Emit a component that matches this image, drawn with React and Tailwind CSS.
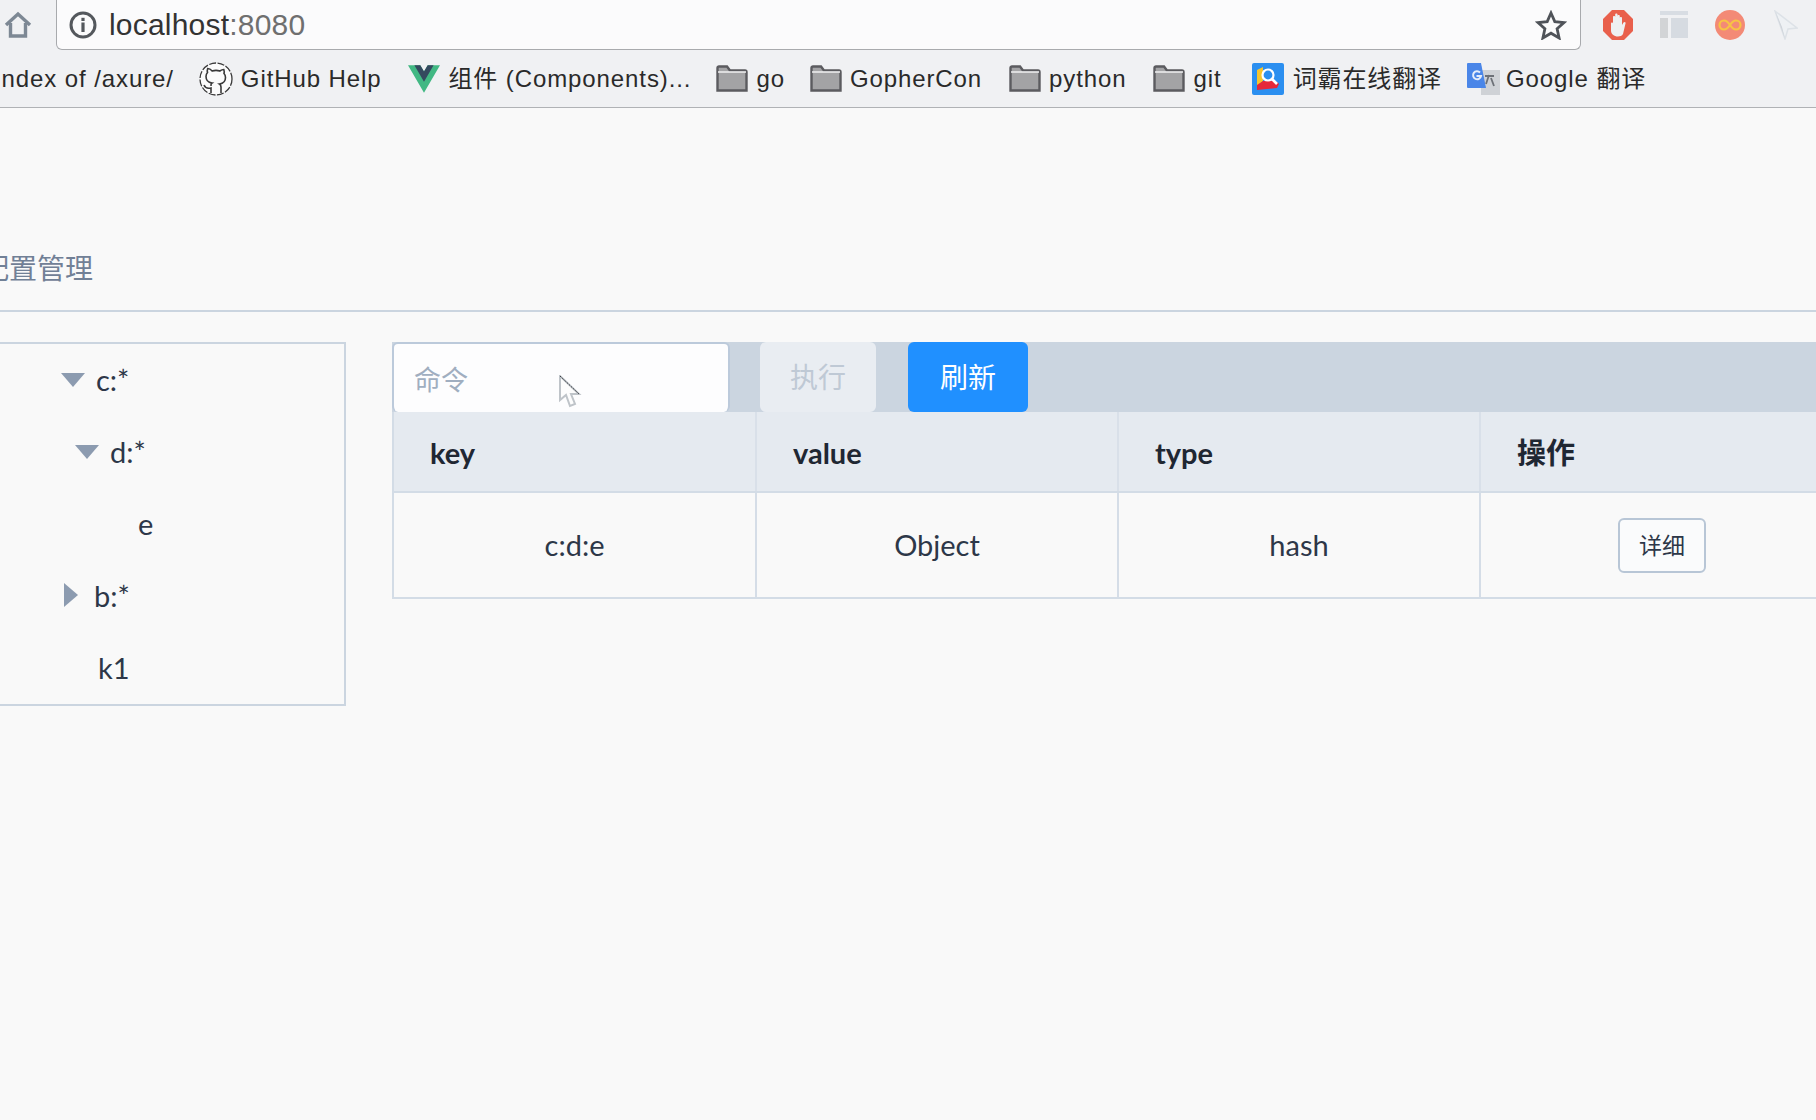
import React from "react";

const Folder = ({ className = "" }) => (
  <svg width="32" height="27" viewBox="0 0 32 27" className={className}>
    <path d="M1.5 25.5V3a1.5 1.5 0 0 1 1.5-1.5h8l3 4h15A1.5 1.5 0 0 1 30.5 7v18.5z" fill="#a3a3a5" stroke="#5b5b5f" strokeWidth="2.4" />
    <path d="M2 7h28" stroke="#f0f0f2" strokeWidth="1.5" />
  </svg>
);

const Bookmark = ({ ml, icon, children, gap = 9 }) => (
  <div className="flex shrink-0 items-center" style={{ marginLeft: ml }}>
    {icon}
    <span className="whitespace-nowrap text-[24px] tracking-[0.9px] text-[#2a2a2a]" style={{ marginLeft: gap }}>{children}</span>
  </div>
);

const Caret = ({ open }) =>
  open ? (
    <svg width="24" height="14" viewBox="0 0 24 14"><path d="M0 0h24L12 14z" fill="#8c9bb0" /></svg>
  ) : (
    <svg width="14" height="24" viewBox="0 0 14 24"><path d="M0 0l14 12L0 24z" fill="#8c9bb0" /></svg>
  );

const TreeRow = ({ pl, caret, gap, children }) => (
  <div className="flex h-[71.8px] items-center" style={{ paddingLeft: pl }}>
    {caret}
    <span className="text-[29px] leading-none text-[#2d3748]" style={{ marginLeft: gap }}>{children}</span>
  </div>
);

const Th = ({ children, last }) => (
  <div className={"flex h-[79px] items-center pl-[36px] pt-[2px] text-[29px] font-bold text-[#1f2733] " + (last ? "" : "border-r-2 border-[#d9e0e9]")}>
    {children}
  </div>
);

const Td = ({ children, last }) => (
  <div className={"flex h-[104px] items-center justify-center text-[29px] text-[#2d3748] " + (last ? "" : "border-r-2 border-[#d5dde7]")}>
    {children}
  </div>
);

export default function App() {
  return (
    <div
      className="relative h-[1120px] w-[1816px] overflow-hidden bg-[#f9f9f9]"
      style={{ fontFamily: '"Liberation Sans", "Noto Sans CJK SC", sans-serif' }}
    >
      {/* browser toolbar */}
      <div className="flex h-[50px] items-stretch bg-[#f0f1f3]">
        <div className="flex w-[56px] shrink-0 items-center pl-[4px]">
          <svg width="28" height="28" viewBox="0 0 28 28" fill="none" stroke="#7d8894" strokeWidth="3.4">
            <path d="M2 14L14 3l12 11" strokeLinejoin="miter" />
            <path d="M6.5 12v13h15V12" />
          </svg>
        </div>
        <div className="flex w-[1525px] shrink-0 items-center rounded-b-[6px] border-x border-b border-[#a8aaad] bg-[#fbfbfc] pl-[12px] pr-[13px]">
          <svg width="28" height="28" viewBox="0 0 28 28" fill="none">
            <circle cx="14" cy="14" r="12" stroke="#54585d" strokeWidth="3" />
            <rect x="12.4" y="11.5" width="3.2" height="9.5" fill="#54585d" />
            <rect x="12.4" y="6.8" width="3.2" height="3.2" fill="#54585d" />
          </svg>
          <span className="ml-[12px] text-[30px] leading-none tracking-[0.2px] text-[#333]">
            localhost<span className="text-[#6f6f6f]">:8080</span>
          </span>
          <svg className="ml-auto" width="32" height="30" viewBox="0 0 32 30" fill="none">
            <path d="M16 3l3.8 8.6 9.2 1-6.9 6.2 2 9.2L16 23.2 7.9 28l2-9.2L3 12.6l9.2-1z" stroke="#4f5359" strokeWidth="2.8" strokeLinejoin="miter" />
          </svg>
        </div>
        <div className="flex flex-1 items-center">
          <svg className="ml-[21px]" width="32" height="32" viewBox="0 0 32 32">
            <path d="M10 1h12l9 9v12l-9 9H10l-9-9V10z" fill="#e9604c" />
            <path d="M9 14.5c0-1.2 2-1.2 2 0V8c0-1.4 2.2-1.4 2.2 0V5.500c0-1.400 2.300-1.400 2.300 0V7c0-1.400 2.300-1.400 2.300 0v2c0-1.300 2.200-1.300 2.200 0v7l1.500-2.500c1-1.300 2.700-.3 2 1L21 25c-1 1.800-3 2.500-5 2.500-4 0-7-2.500-7-6z" fill="#eef0f2" />
          </svg>
          <svg className="ml-[25px]" width="30" height="30" viewBox="0 0 30 30">
            <rect x="1" y="1" width="28" height="4" fill="#d8dde3" />
            <rect x="1" y="8" width="8" height="20" fill="#d2d4d6" />
            <rect x="12" y="8" width="17" height="20" fill="#d6dbe1" />
          </svg>
          <svg className="ml-[26px]" width="30" height="30" viewBox="0 0 30 30" fill="none">
            <circle cx="15" cy="15" r="15" fill="#f38a76" />
            <path d="M15 15c-2-3-4-4.500-6-4.500a4.500 4.500 0 0 0 0 9c2 0 4-1.500 6-4.500s4-4.500 6-4.500a4.500 4.500 0 0 1 0 9c-2 0-4-1.500-6-4.500z" stroke="#f7c344" strokeWidth="2.2" />
          </svg>
          <svg className="ml-[29px]" width="24" height="30" viewBox="0 0 24 30">
            <path d="M1 1l22 17-9 1-3 10z" fill="#eef1f4" stroke="#dde2e7" strokeWidth="1.500" />
            <path d="M1 1l10 28L8 17z" fill="#cfd4da" />
          </svg>
        </div>
      </div>

      {/* bookmarks */}
      <div className="flex h-[58px] items-center overflow-hidden border-b border-[#b0b2b5] bg-[#f0f1f3]">
        <span className="ml-[-6px] shrink-0 whitespace-nowrap text-[24px] tracking-[0.9px] text-[#2a2a2a]">Index of /axure/</span>
        <Bookmark
          ml={25}
          gap={8}
          icon={
            <svg width="34" height="34" viewBox="0 0 34 34" fill="none">
              <circle cx="17" cy="17" r="16" fill="#fcfcfc" stroke="#3a3a3a" strokeWidth="1.300" strokeDasharray="7 1.500" />
              <path d="M12 31v-5c-4 1-6-.5-7-3M22 31v-6c0-1.500-.6-2.500-1.500-3 3.500-.5 6-2.200 6-6.500 0-1.700-.6-3-1.500-4 .3-1 .3-2.500-.2-4-1.500 0-3 .8-4 1.500a13 13 0 0 0-7.600 0C11.700 7.300 10.200 6.500 8.700 6.500c-.5 1.500-.5 3-.2 4-.9 1-1.500 2.300-1.500 4 0 4.300 2.500 6 6 6.500-.9.500-1.200 1.500-1 3" stroke="#3a3a3a" strokeWidth="1.600" />
            </svg>
          }
        >
          GitHub Help
        </Bookmark>
        <Bookmark
          ml={27}
          gap={8}
          icon={
            <svg width="32" height="28" viewBox="0 0 261.76 226.69">
              <path d="M161.096.001l-30.225 52.351L100.647.001H-.005l130.876 226.688L261.749.001z" fill="#41b883" />
              <path d="M161.096.001l-30.225 52.351L100.647.001H52.346l78.525 136.01L209.398.001z" fill="#34495e" />
            </svg>
          }
        >
          组件 (Components)...
        </Bookmark>
        <Bookmark ml={25} gap={8} icon={<Folder />}>go</Bookmark>
        <Bookmark ml={25} gap={8} icon={<Folder />}>GopherCon</Bookmark>
        <Bookmark ml={27} gap={8} icon={<Folder />}>python</Bookmark>
        <Bookmark ml={26} gap={9} icon={<Folder />}>git</Bookmark>
        <Bookmark
          ml={30}
          icon={
            <svg width="32" height="32" viewBox="0 0 32 32">
              <rect width="32" height="32" rx="2" fill="#2b8ff0" />
              <path d="M5 7l6-3v14l-6 5z" fill="#f6c42e" />
              <path d="M5 27v-5l6-4h9c3 0 6 1 7 3l-2 4z" fill="#e5283a" />
              <circle cx="16" cy="12" r="5.500" fill="#2b8ff0" stroke="#fff" strokeWidth="2.200" />
              <path d="M20 16l5 5" stroke="#fff" strokeWidth="2.600" />
            </svg>
          }
        >
          词霸在线翻译
        </Bookmark>
        <Bookmark
          ml={25}
          gap={6}
          icon={
            <svg width="33" height="32" viewBox="0 0 33 32">
              <rect x="14" y="7" width="19" height="25" fill="#cfd2d6" />
              <path d="M18 13h9M22 12l-3 9M24 15l3 8" stroke="#6d7177" strokeWidth="1.800" fill="none" />
              <path d="M1 0h13l5 25H1a1 1 0 0 1-1-1V1a1 1 0 0 1 1-1z" fill="#4a86e8" />
              <path d="M13 9.500a4 4 0 1 0 1 3.500H9.500" stroke="#e6eefb" strokeWidth="2" fill="none" />
            </svg>
          }
        >
          Google 翻译
        </Bookmark>
      </div>

      {/* page */}
      <div style={{ fontFamily: 'Lato, "Noto Sans CJK SC", sans-serif' }}>
        <div className="flex h-[204px] items-end border-b-2 border-[#cbd5e0] pb-[24px]">
          <h1 className="ml-[-19px] text-[28px] font-normal leading-[36px] text-[#718096]">配置管理</h1>
        </div>
        <div className="flex pt-[30px]">
          <div className="ml-[-10px] h-[364px] w-[356px] shrink-0 border-2 border-[#cbd5e0]">
            <TreeRow pl={69} caret={<Caret open />} gap={11}>c:*</TreeRow>
            <TreeRow pl={83} caret={<Caret open />} gap={11}>d:*</TreeRow>
            <TreeRow pl={146} gap={0}>e</TreeRow>
            <TreeRow pl={72} caret={<Caret />} gap={16}>b:*</TreeRow>
            <TreeRow pl={106} gap={0}>k1</TreeRow>
          </div>
          <div className="ml-[46px] w-[1451px] shrink-0">
            <div className="flex h-[70px] bg-[#cbd5e0]">
              <div className="flex w-[338px] items-center rounded-[6px] border-2 border-b-0 border-[#bccadb] bg-[#fdfdfe] pl-[20px] pt-[4px] text-[27px] text-[#a0aec0]">
                命令
              </div>
              <button className="ml-[30px] w-[116px] rounded-[6px] bg-[#e9edf2] text-[28px] text-[#bfc9d5]">执行</button>
              <button className="ml-[32px] w-[120px] rounded-[6px] bg-[#2090ff] text-[28px] text-white">刷新</button>
            </div>
            <div className="grid grid-cols-[363px_362px_362px_362px] border-b-2 border-l-2 border-[#d3dce6]">
              <div className="col-span-4 grid grid-cols-subgrid border-b-2 border-[#d3dce6] bg-[#e5eaf0]">
                <Th>key</Th>
                <Th>value</Th>
                <Th>type</Th>
                <Th last>操作</Th>
              </div>
              <Td>c:d:e</Td>
              <Td>Object</Td>
              <Td>hash</Td>
              <Td last>
                <button className="h-[55px] w-[88px] rounded-[6px] border-2 border-[#b8c6d6] bg-[#fafbfc] text-[23px] text-[#2d3748]">详细</button>
              </Td>
            </div>
          </div>
        </div>
      </div>

      {/* mouse pointer */}
      <svg className="absolute left-[558px] top-[375px]" width="24" height="34" viewBox="0 0 24 34">
        <path d="M2 1v24l6-5 4 11 5-2-4-10h8z" fill="#fdfdfd" stroke="#bfc4c9" strokeWidth="2" />
        <path d="M2 1l19 18" stroke="#3c3f44" strokeWidth="1" strokeDasharray="2 1" />
      </svg>
    </div>
  );
}
